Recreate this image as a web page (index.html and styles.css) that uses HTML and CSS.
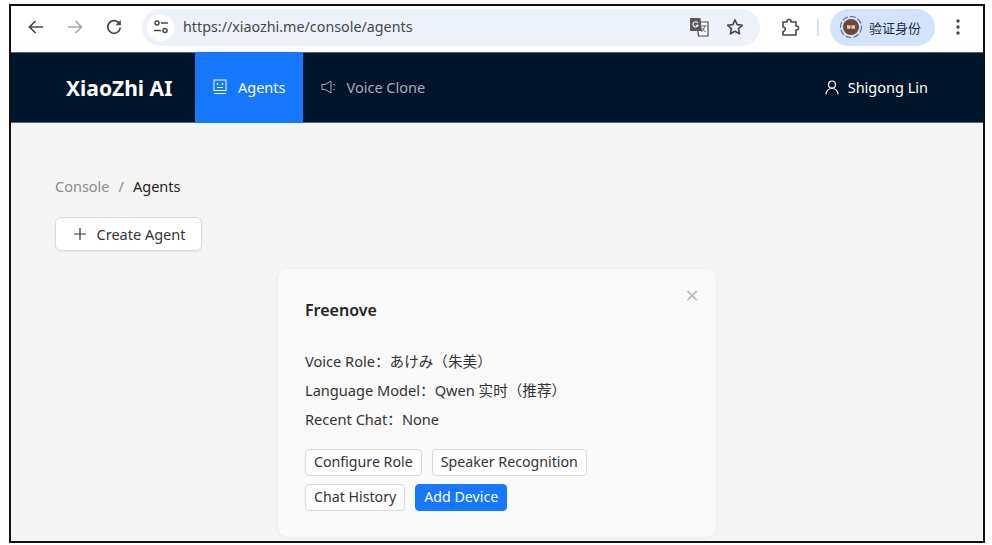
FILE: index.html
```html
<!DOCTYPE html>
<html lang="en">
  <head>
    <meta charset="UTF-8" />
    <meta name="viewport" content="width=device-width, initial-scale=1.0" />
    <title>XiaoZhi AI</title>
    <link rel="stylesheet" href="styles.css">
  </head>
  <body>
    <div class="frame">
      <div class="browser-bar">
        <div class="browser-nav">
          <svg class="ico" viewBox="0 0 20 20"><path d="M17 10H4M9.5 4 3.5 10l6 6" fill="none" stroke="#474747" stroke-width="1.7"/></svg>
          <svg class="ico" viewBox="0 0 20 20"><path d="M3 10h13M10.5 4l6 6-6 6" fill="none" stroke="#a9a9a9" stroke-width="1.7"/></svg>
          <svg class="ico" viewBox="0 0 20 20"><path d="M15.6 7A6.3 6.3 0 1 0 16.3 10.5" fill="none" stroke="#474747" stroke-width="1.7"/><path d="M16.8 3v5.2h-5.2z" fill="#474747"/></svg>
        </div>

        <div class="omnibox">
          <span class="site-btn">
            <svg width="16" height="16" viewBox="0 0 16 16"><g fill="none" stroke="#474747" stroke-width="1.5"><circle cx="4" cy="4" r="2"/><path d="M8 4h7M1 11.500h7"/><circle cx="12" cy="11.500" r="2"/></g></svg>
          </span>
          <span class="url">https://xiaozhi.me/console/agents</span>
          <svg class="translate" width="20" height="20" viewBox="0 0 20 20"><path d="M8 5h11v14H9.500z" fill="#fff" stroke="#474747" stroke-width="1.200"/><path d="M1 1h10.500l1.500 13H1z" fill="#5a5a5a"/><path d="M8.800 6A2.600 2.600 0 1 0 9 8.300H6.800" fill="none" stroke="#fff" stroke-width="1.100"/><path d="M13 9h4.500M15.500 9c-.2 2.500-1.300 4.500-3 6M13.500 11.500c.8 1.500 2 3 3.500 3.800" fill="none" stroke="#474747" stroke-width=".9"/></svg>
          <svg class="star" width="20" height="20" viewBox="0 0 20 20"><path d="m10 2.800 2.200 4.800 5.200.6-3.900 3.500 1.100 5.100L10 14.200l-4.600 2.600 1.100-5.100-3.900-3.500 5.200-.6z" fill="none" stroke="#474747" stroke-width="1.600" stroke-linejoin="round"/></svg>
        </div>

        <svg class="puzzle" width="20" height="20" viewBox="0 0 20 20"><path d="M7 4.500a2 2 0 0 1 4 0V5h5v4h.500a2 2 0 0 1 0 4H16v5H3v-3.500h.500a2.300 2.300 0 0 0 0-4.500H3V5h4z" fill="none" stroke="#474747" stroke-width="1.600" stroke-linejoin="round"/></svg>
        <span class="bar-divider"></span>

        <div class="profile">
          <svg width="24" height="24" viewBox="0 0 24 24"><circle cx="12" cy="12" r="10.500" fill="none" stroke="#5f6f8c" stroke-width="1.200" stroke-dasharray="6 2"/><circle cx="12" cy="12" r="8" fill="#6e4a36"/><path d="M8 12h8" stroke="#d9cdc4" stroke-width="3.500" stroke-dasharray="3.500 1"/></svg>
          <span class="profile-name">验证身份</span>
        </div>

        <svg class="dots" width="4" height="16" viewBox="0 0 4 16"><circle cx="2" cy="2" r="1.700"/><circle cx="2" cy="8" r="1.700"/><circle cx="2" cy="14" r="1.700"/></svg>
      </div>

      <nav class="navbar">
        <div class="logo">XiaoZhi AI</div>
        <a class="nav-item active">
          <svg width="14" height="16" viewBox="0 0 14 16"><g fill="none" stroke="#fff" stroke-width="1"><rect x="1" y="1" width="12" height="10.500"/><path d="M1 14.500h12M4 8.500h6"/></g><circle cx="4.500" cy="5" r=".9" fill="#fff"/><circle cx="9.500" cy="5" r=".9" fill="#fff"/></svg>
          Agents
        </a>
        <a class="nav-item">
          <svg width="15" height="14" viewBox="0 0 15 14"><path d="M1 4.500h3L10 1v12L4 9.500H1z" fill="none" stroke="#a6adb4" stroke-width="1" stroke-linejoin="round"/><path d="M12.500 4.500h1.500M12.500 9.500h1.500" stroke="#a6adb4" stroke-width="1.200"/></svg>
          Voice Clone
        </a>
        <div class="user">
          <svg width="14" height="15" viewBox="0 0 14 15"><g fill="none" stroke="#fff" stroke-width="1.200"><circle cx="7" cy="4.500" r="3.500"/><path d="M1 14.500c.3-3.500 2.700-6 6-6s5.700 2.500 6 6"/></g></svg>
          Shigong Lin
        </div>
      </nav>

      <main class="content">
        <div class="breadcrumb">
          <span class="crumb-link">Console</span>
          <span class="crumb-sep">/</span>
          <span>Agents</span>
        </div>

        <button class="btn btn-create">
          <svg width="14" height="14" viewBox="0 0 14 14"><path d="M7 1v12M1 7h12" stroke="#333" stroke-width="1.200"/></svg>
          Create Agent
        </button>

        <div class="card-row">
          <section class="card">
            <span class="card-close">×</span>
            <h2 class="card-title">Freenove</h2>
            <div class="card-info">
              <p>Voice Role：あけみ（朱美）</p>
              <p>Language Model：Qwen 实时（推荐）</p>
              <p>Recent Chat：None</p>
            </div>
            <div class="card-actions">
              <button class="btn btn-small">Configure Role</button>
              <button class="btn btn-small">Speaker Recognition</button>
              <button class="btn btn-small">Chat History</button>
              <button class="btn btn-small btn-primary">Add Device</button>
            </div>
          </section>
        </div>
      </main>
    </div>
  </body>
</html>
```

FILE: styles.css
```css
* {
  margin: 0;
  padding: 0;
  box-sizing: border-box;
}

html,
body {
  height: 100%;
  background: #fff;
  overflow: hidden;
}

body {
  padding: 4px 7px 2px 9px;
  font-family: "Noto Sans", "Noto Sans CJK SC", sans-serif;
  color: #333;
}

.frame {
  height: 539px;
  border: 2px solid #111;
  display: flex;
  flex-direction: column;
  overflow: hidden;
  background: #f5f5f5;
}

/* browser chrome */
.browser-bar {
  height: 46px;
  flex: none;
  padding-bottom: 4px;
  display: flex;
  align-items: center;
  background: #fff;
}

.browser-nav {
  display: flex;
  align-items: center;
  gap: 19px;
  margin-left: 15px;
}

.ico {
  width: 20px;
  height: 20px;
}

.omnibox {
  width: 618px;
  height: 37px;
  margin-left: 18px;
  padding-left: 5px;
  display: flex;
  align-items: center;
  background: #edf1f9;
  border-radius: 19px;
}

.site-btn {
  width: 27px;
  height: 27px;
  display: flex;
  align-items: center;
  justify-content: center;
  background: #fff;
  border-radius: 50%;
}

.url {
  margin: 0 0 1px 9px;
  font-size: 14.3px;
  color: #474747;
}

.translate {
  margin-left: auto;
}

.star {
  margin: 0 15px 0 16px;
}

.puzzle {
  margin-left: 20px;
}

.bar-divider {
  width: 2px;
  height: 17px;
  margin-left: 17px;
  background: #d3e3fd;
}

.profile {
  width: 105px;
  height: 37px;
  margin-left: 11px;
  padding-left: 9px;
  display: flex;
  align-items: center;
  gap: 6px;
  background: #d3e3fd;
  border-radius: 19px;
}

.profile-name {
  font-size: 13px;
  color: #1f2a44;
}

.dots {
  margin-left: 21px;
  fill: #474747;
}

/* site navbar */
.navbar {
  height: 71px;
  flex: none;
  display: flex;
  align-items: stretch;
  background: #001529;
  border-top: 1px solid #5a6672;
  border-bottom: 1px solid #5a6672;
}

.logo {
  width: 184px;
  padding-left: 55px;
  display: flex;
  align-items: center;
  font-size: 21px;
  font-weight: 700;
  color: #fff;
}

.nav-item {
  display: flex;
  align-items: center;
  gap: 11px;
  padding: 0 17px 1px 18px;
  font-size: 14.5px;
  color: #a6adb4;
}

.nav-item.active {
  margin: -1px 0;
  background: #1677ff;
  color: #fff;
}

.user {
  margin-left: auto;
  margin-right: 55px;
  padding-bottom: 1px;
  display: flex;
  align-items: center;
  gap: 9px;
  font-size: 14.5px;
  color: #fff;
}

/* page content */
.content {
  flex: 1;
  padding: 52px 44px 0;
}

.breadcrumb {
  display: flex;
  gap: 9px;
  font-size: 14.5px;
  line-height: 22px;
  color: #222;
}

.crumb-link,
.crumb-sep {
  color: #8c8c8c;
}

.btn {
  font-family: inherit;
  background: #fff;
  border: 1px solid #d9d9d9;
  color: #333;
}

.btn-create {
  width: 147px;
  height: 34px;
  margin-top: 20px;
  padding: 0 0 1px 1px;
  display: flex;
  align-items: center;
  justify-content: center;
  gap: 10px;
  font-size: 14.5px;
  border-radius: 6px;
  box-shadow: 0 1px 2px rgba(0, 0, 0, 0.05);
}

.card-row {
  display: flex;
  justify-content: center;
  margin-top: 18px;
}

.card {
  position: relative;
  width: 438px;
  height: 268px;
  padding: 30px 27px 0;
  background: #fafafa;
  border-radius: 10px;
  box-shadow: 0 1px 4px rgba(0, 0, 0, 0.06);
}

.card-close {
  position: absolute;
  top: 14px;
  right: 17px;
  font-size: 24px;
  line-height: 24px;
  color: #bdbdbd;
}

.card-title {
  font-size: 16px;
  font-weight: 600;
  line-height: 22px;
  color: #222;
}

.card-info {
  margin-top: 26px;
  font-size: 14.6px;
  line-height: 29px;
  text-spacing-trim: space-all;
}

.card-actions {
  margin-top: 15px;
  display: flex;
  flex-wrap: wrap;
  gap: 8px 10px;
  width: 300px;
}

.btn-small {
  height: 27px;
  padding: 0 8px 2px;
  font-size: 14.2px;
  border-radius: 4px;
}

.btn-primary {
  background: #1677ff;
  border-color: #1677ff;
  color: #fff;
}
```
